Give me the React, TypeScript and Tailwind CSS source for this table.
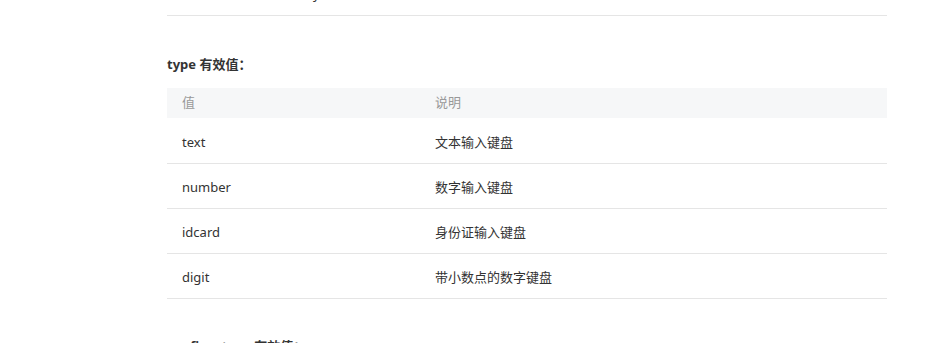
import React from "react";

const rows = [
  ["text", "文本输入键盘"],
  ["number", "数字输入键盘"],
  ["idcard", "身份证输入键盘"],
  ["digit", "带小数点的数字键盘"],
];

export default function App() {
  return (
    <div
      className="w-[936px] h-[343px] overflow-hidden bg-white text-[#333]"
      style={{ fontFamily: '"Noto Sans", "Noto Sans CJK SC", sans-serif' }}
    >
      <div className="ml-[167px] w-[720px]">
        <div className="h-[16px] border-b border-[#e5e5e5] flex items-start">
          <span className="ml-[146px] mt-[-14px] text-[13px] leading-[17px]">y</span>
        </div>
        <h3 className="mt-[38px] text-[13px] font-bold leading-[20px] text-[#333]">type 有效值：</h3>
        <div className="mt-[14px] text-[13px]">
          <div className="flex h-[31px] items-center border-b border-white">
            <div className="flex h-[30px] w-full items-center bg-[#f6f7f8] text-[#999]">
              <div className="w-[268px] pl-[15px]">值</div>
              <div className="flex-1">说明</div>
            </div>
          </div>
          {rows.map(([v, d]) => (
            <div key={v} className="flex h-[45px] items-center border-b border-[#e5e5e5] pt-[4px]">
              <div className="w-[268px] pl-[15px]">{v}</div>
              <div className="flex-1">{d}</div>
            </div>
          ))}
        </div>
        <h3 className="mt-[37px] text-[13px] font-bold leading-[20px] text-[#333]">confirm-type 有效值：</h3>
      </div>
    </div>
  );
}
